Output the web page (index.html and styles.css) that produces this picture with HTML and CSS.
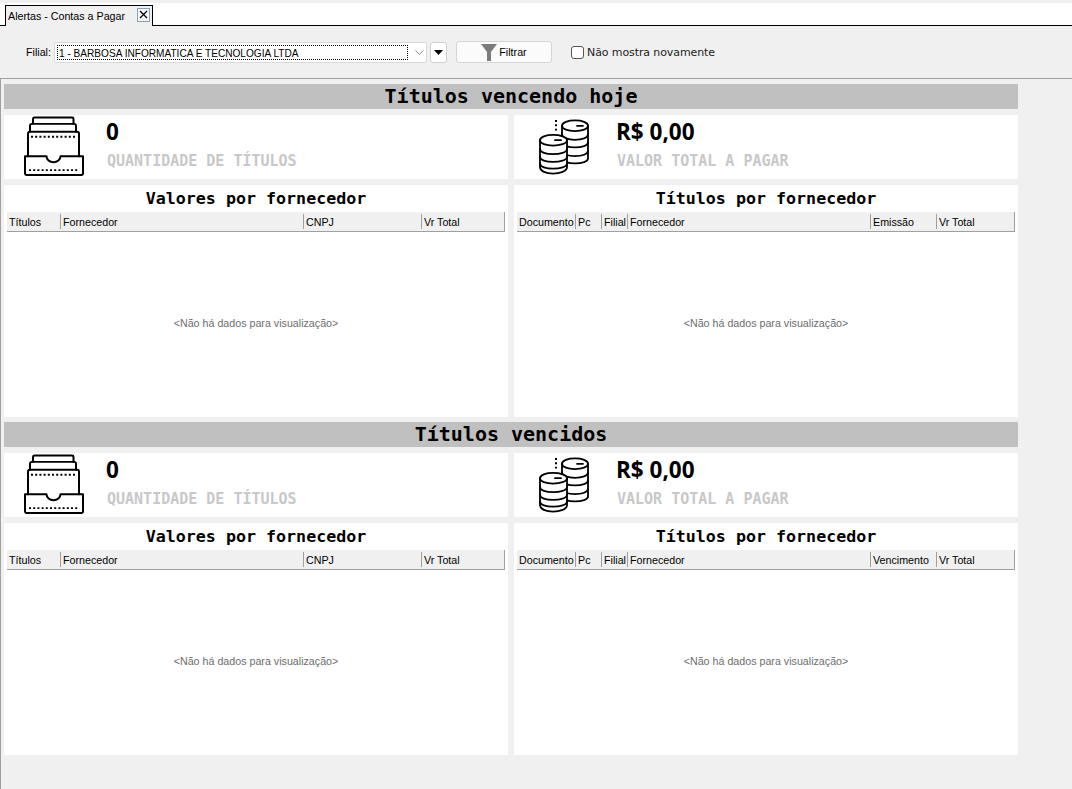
FILE: index.html
```html
<!DOCTYPE html>
<html lang="pt">
<head>
<meta charset="utf-8">
<title>Alertas - Contas a Pagar</title>
<link rel="stylesheet" href="styles.css">
</head>
<body>
<svg class="defs" width="0" height="0" aria-hidden="true">
  <symbol id="box" viewBox="0 0 60 62" preserveAspectRatio="none">
    <g fill="none" stroke="#000" stroke-width="2" stroke-linejoin="round" stroke-linecap="round">
      <path d="M9 8V3a1.500 1.500 0 0 1 1.500-1.500H48a1.500 1.500 0 0 1 1.500 1.500V8"/>
      <path d="M6 16V10a2 2 0 0 1 2-2H50a2 2 0 0 1 2 2V16"/>
      <path d="M4 41V18a2 2 0 0 1 2-2H53a2 2 0 0 1 2 2V41"/>
      <path d="M1 41H22.500a7 6 0 0 0 14 0H59V58.500a1.500 1.500 0 0 1-1.500 1.500H2.500A1.500 1.500 0 0 1 1 58.500Z"/>
    </g>
    <path d="M7 21H53M5 55H55" fill="none" stroke="#000" stroke-width="2" stroke-dasharray="2 2.200"/>
  </symbol>
  <symbol id="coins" viewBox="0 0 52 58" preserveAspectRatio="none">
    <g fill="#fff" stroke="#000" stroke-width="1.800" stroke-linecap="round">
      <path d="M23 7C23 3.500 29 1.500 36 1.500S49 3.500 49 7V41C49 44 43 46 36 46S23 44 23 41Z"/>
      <path d="M23 7C23 10.500 29 12.500 36 12.500S49 10.500 49 7M23 16C23 19.500 29 21.500 36 21.500S49 19.500 49 16M23 24C23 27.500 29 29.500 36 29.500S49 27.500 49 24M23 33C23 36.500 29 38.500 36 38.500S49 36.500 49 33" fill="none"/>
      <path d="M1 22C1 18.500 7 16.500 14 16.500S28 18.500 28 22V50C28 54 21 56.500 14 56.500S1 54 1 50Z"/>
      <path d="M1 22C1 25.500 7 27.500 14 27.500S28 25.500 28 22M1 31C1 34.500 7 36.500 14 36.500S28 34.500 28 31M1 39C1 42.500 7 44.500 14 44.500S28 42.500 28 39M1 46C1 49.500 7 51.500 14 51.500S28 49.500 28 46" fill="none"/>
      <path d="M38 7H44M16 22H22" fill="none"/>
    </g>
    <path d="M17 1V14" fill="none" stroke="#000" stroke-width="2" stroke-dasharray="2 2.500"/>
  </symbol>
</svg>

<div class="app">
  <div class="tabbar">
    <div class="tab">
      <span class="tab-label">Alertas - Contas a Pagar</span>
      <span class="tab-close">
        <svg width="9" height="9" viewBox="0 0 9 9"><path d="M1 1L8 8M8 1L1 8" stroke="#000" stroke-width="1.300" fill="none"/></svg>
      </span>
    </div>
  </div>

  <div class="toolbar">
    <span class="filial-label">Filial:</span>
    <div class="combo">
      <span class="combo-value">1 - BARBOSA INFORMATICA E TECNOLOGIA LTDA</span>
      <svg class="combo-chevron" width="9" height="5" viewBox="0 0 9 5"><path d="M0.500 0.500L4.500 4.500L8.500 0.500" fill="none" stroke="#8a8a8a"/></svg>
    </div>
    <button class="arrow-btn" type="button">
      <svg width="9" height="5" viewBox="0 0 9 5"><path d="M0 0H9L4.500 5Z" fill="#000"/></svg>
    </button>
    <button class="filter-btn" type="button">
      <svg width="16" height="17" viewBox="0 0 16 17"><path d="M0 0H16L10 8V17H6V8Z" fill="#7b7b7b"/></svg>
      <span>Filtrar</span>
    </button>
    <label class="check">
      <span class="check-box"></span>
      <span class="check-text">Não mostra novamente</span>
    </label>
  </div>

  <div class="content">
    <section class="block">
      <h2 class="band">Títulos vencendo hoje</h2>
      <div class="grid">
        <div class="card kpi">
          <svg class="ico-box"><use href="#box"/></svg>
          <div class="kpi-text"><div class="kpi-value">0</div><div class="kpi-caption">QUANTIDADE DE TÍTULOS</div></div>
        </div>
        <div class="card kpi">
          <svg class="ico-coins"><use href="#coins"/></svg>
          <div class="kpi-text"><div class="kpi-value">R$ 0,00</div><div class="kpi-caption">VALOR TOTAL A PAGAR</div></div>
        </div>
        <div class="card panel">
          <h3 class="panel-title">Valores por fornecedor</h3>
          <div class="thead cols-left"><span>Títulos</span><span>Fornecedor</span><span>CNPJ</span><span>Vr Total</span></div>
          <div class="empty">&lt;Não há dados para visualização&gt;</div>
        </div>
        <div class="card panel">
          <h3 class="panel-title">Títulos por fornecedor</h3>
          <div class="thead cols-right"><span>Documento</span><span>Pc</span><span>Filial</span><span>Fornecedor</span><span>Emissão</span><span>Vr Total</span></div>
          <div class="empty">&lt;Não há dados para visualização&gt;</div>
        </div>
      </div>
    </section>

    <section class="block">
      <h2 class="band">Títulos vencidos</h2>
      <div class="grid">
        <div class="card kpi">
          <svg class="ico-box"><use href="#box"/></svg>
          <div class="kpi-text"><div class="kpi-value">0</div><div class="kpi-caption">QUANTIDADE DE TÍTULOS</div></div>
        </div>
        <div class="card kpi">
          <svg class="ico-coins"><use href="#coins"/></svg>
          <div class="kpi-text"><div class="kpi-value">R$ 0,00</div><div class="kpi-caption">VALOR TOTAL A PAGAR</div></div>
        </div>
        <div class="card panel">
          <h3 class="panel-title">Valores por fornecedor</h3>
          <div class="thead cols-left"><span>Títulos</span><span>Fornecedor</span><span>CNPJ</span><span>Vr Total</span></div>
          <div class="empty">&lt;Não há dados para visualização&gt;</div>
        </div>
        <div class="card panel">
          <h3 class="panel-title">Títulos por fornecedor</h3>
          <div class="thead cols-right"><span>Documento</span><span>Pc</span><span>Filial</span><span>Fornecedor</span><span>Vencimento</span><span>Vr Total</span></div>
          <div class="empty">&lt;Não há dados para visualização&gt;</div>
        </div>
      </div>
    </section>
  </div>
</div>
</body>
</html>
```

FILE: styles.css
```css
* { box-sizing: border-box; }
html, body { margin: 0; padding: 0; height: 100%; overflow: hidden; }
body { background: #f0f0f0; font-family: "Liberation Sans", Arial, sans-serif; font-size: 10.700px; color: #000; }
.defs { display: block; height: 0; }
.app { height: 789px; display: flex; flex-direction: column; }

.tabbar { margin-top: 3px; height: 23px; background: #fff; border-bottom: 1px solid #000; padding-left: 5px; display: flex; align-items: flex-start; }
.tab { margin-top: 2px; width: 148px; height: 21px; background: #f0f0f0; border: 1px solid #000; border-bottom: 0; display: flex; align-items: center; position: relative; padding-left: 2px; }
.tab-label { width: 129px; line-height: 20px; white-space: nowrap; }
.tab-close { width: 13px; height: 14px; border: 1px solid #8aa0b8; background: #f4f8fc; display: flex; align-items: center; justify-content: center; margin-top: -3px; }

.toolbar { height: 53px; flex: none; display: flex; align-items: center; padding-left: 26px; border-bottom: 1px solid #a0a0a0; }
.filial-label { width: 28px; }
.combo { width: 373px; height: 21px; background: #fff; border: 1px solid #d9d9d9; border-radius: 2px; display: flex; align-items: center; padding: 0 6px 0 2px; }
.combo-value { flex: none; width: 351px; height: 15px; line-height: 15px; border: 1px dotted #000; padding-left: 1px; font-size: 10.100px; white-space: nowrap; overflow: hidden; }
.combo-chevron { margin-left: 7px; flex: none; }
.arrow-btn { width: 17px; height: 21px; margin-left: 3px; padding: 0; background: #fff; border: 1px solid #d0d0d0; border-radius: 3px; display: flex; align-items: center; justify-content: center; }
.filter-btn { width: 96px; height: 22px; margin-left: 9px; padding: 0; background: #fbfbfb; border: 1px solid #d4d4d4; border-radius: 3px; display: flex; align-items: center; justify-content: center; gap: 2px; font: inherit; color: #000; }
.filter-btn svg { margin-top: 1px; }
.check { display: flex; align-items: center; margin-left: 19px; font-family: "DejaVu Sans", sans-serif; font-size: 11px; letter-spacing: -0.100px; gap: 3px; color: #222; }
.check-text { line-height: 16px; padding-top: 1px; }
.check-box { width: 13px; height: 13px; background: #fff; border: 1px solid #555; border-radius: 3px; }

.content { flex: 1; border-left: 1px solid #a0a0a0; padding: 5px 0 0 3px; display: flex; flex-direction: column; gap: 5px; }
.block { width: 1014px; }
.band { margin: 0; height: 25px; background: #c0c0c0; text-align: center; font: bold 20px/25px "DejaVu Sans Mono", monospace; }
.grid { display: grid; grid-template-columns: 504px 504px; grid-template-rows: 64px 232px; column-gap: 6px; row-gap: 6px; margin-top: 6px; }
.card { background: #fff; min-width: 0; }
.kpi { display: flex; align-items: flex-start; position: relative; }
.ico-box { width: 60px; height: 61px; margin: 1px 0 0 20px; flex: none; }
.ico-coins { width: 52px; height: 56px; margin: 4px 0 0 25px; flex: none; }
.kpi-text { margin-left: 23px; }
.kpi .ico-coins + .kpi-text { margin-left: 26px; }
.kpi-value { font: bold 22.500px/24px "Open Sans", sans-serif; margin: 5px 0 0 -1px; }
.kpi-caption { font: bold 15px/18px "DejaVu Sans Mono", monospace; color: #c8c8c8; margin-top: 8px; white-space: nowrap; }

.panel { display: flex; flex-direction: column; padding: 0 3px; }
.panel-title { margin: 0; height: 27px; text-align: center; font: bold 16.670px/28px "DejaVu Sans Mono", monospace; }
.thead { height: 20px; flex: none; display: grid; background: #f0f0f0; border-bottom: 1px solid #a0a0a0; border-right: 1px solid #a0a0a0; }
.thead span { padding-left: 2px; border-right: 1px solid #a0a0a0; height: 15px; margin-top: 2px; line-height: 17px; white-space: nowrap; overflow: hidden; }
.thead span:last-child { border-right: 0; }
.cols-left { grid-template-columns: 54px 243px 118px 1fr; }
.cols-right { grid-template-columns: 59px 26px 26px 243px 66px 1fr; }
.empty { flex: 1; display: flex; align-items: center; justify-content: center; color: #6d6d6d; padding-bottom: 3px; }
```
